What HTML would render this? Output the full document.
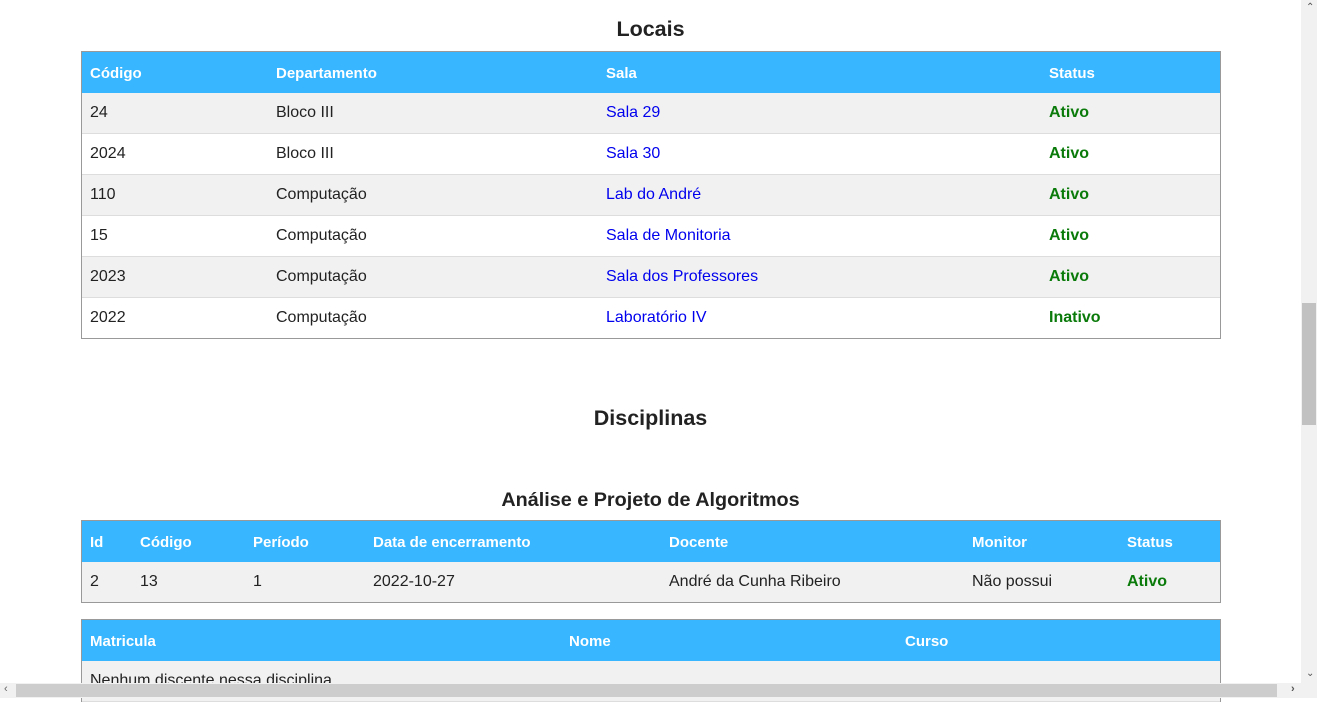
<!DOCTYPE html>
<html><head><meta charset="utf-8"><style>
body{margin:0;width:1317px;height:698px;overflow:hidden;background:#fff;font-family:"Liberation Sans",sans-serif;position:relative;color:#222}
h2{position:absolute;left:0;width:1301px;text-align:center;margin:0;font-size:21.5px;font-weight:bold;color:#222}
h3{position:absolute;left:0;width:1301px;text-align:center;margin:0;font-size:19.8px;font-weight:bold;color:#222}
.t{position:absolute;left:81px;width:1138px;border:1px solid #999;border-top:none;border-bottom:none}
.r{height:40px;position:relative;border-bottom:1px solid #ddd;font-size:16px}
.r span{position:absolute;top:11px}
.h{background:#38b6ff;color:#fff;font-weight:bold;font-size:15px;border-top:1px solid #999;border-bottom:none;height:41px}
.h span{top:13px}
.g{background:#f1f1f1}
.a{color:#0000ee}.s{color:#0a7a0a;font-weight:bold}
</style></head><body>
<h2 style="top:17px">Locais</h2>
<div class="t" style="top:51px;border-bottom:1px solid #999">
<div class="r h"><span style="left:8px">Código</span><span style="left:194px">Departamento</span><span style="left:524px">Sala</span><span style="left:967px">Status</span></div>
<div class="r g"><span style="left:8px">24</span><span style="left:194px">Bloco III</span><span style="left:524px" class="a">Sala 29</span><span style="left:967px" class="s">Ativo</span></div>
<div class="r"><span style="left:8px">2024</span><span style="left:194px">Bloco III</span><span style="left:524px" class="a">Sala 30</span><span style="left:967px" class="s">Ativo</span></div>
<div class="r g"><span style="left:8px">110</span><span style="left:194px">Computação</span><span style="left:524px" class="a">Lab do André</span><span style="left:967px" class="s">Ativo</span></div>
<div class="r"><span style="left:8px">15</span><span style="left:194px">Computação</span><span style="left:524px" class="a">Sala de Monitoria</span><span style="left:967px" class="s">Ativo</span></div>
<div class="r g"><span style="left:8px">2023</span><span style="left:194px">Computação</span><span style="left:524px" class="a">Sala dos Professores</span><span style="left:967px" class="s">Ativo</span></div>
<div class="r" style="border-bottom:none"><span style="left:8px">2022</span><span style="left:194px">Computação</span><span style="left:524px" class="a">Laboratório IV</span><span style="left:967px" class="s">Inativo</span></div>
</div>
<h2 style="top:406px">Disciplinas</h2>
<h3 style="top:489px">Análise e Projeto de Algoritmos</h3>
<div class="t" style="top:520px;border-bottom:1px solid #999">
<div class="r h"><span style="left:8px">Id</span><span style="left:58px">Código</span><span style="left:171px">Período</span><span style="left:291px">Data de encerramento</span><span style="left:587px">Docente</span><span style="left:890px">Monitor</span><span style="left:1045px">Status</span></div>
<div class="r g" style="border-bottom:none"><span style="left:8px">2</span><span style="left:58px">13</span><span style="left:171px">1</span><span style="left:291px">2022-10-27</span><span style="left:587px">André da Cunha Ribeiro</span><span style="left:890px">Não possui</span><span style="left:1045px" class="s">Ativo</span></div>
</div>
<div class="t" style="top:619px">
<div class="r h"><span style="left:8px">Matricula</span><span style="left:487px">Nome</span><span style="left:823px">Curso</span></div>
<div class="r g"><span style="left:8px">Nenhum discente nessa disciplina</span></div>
</div>
<div style="position:absolute;left:1301px;top:0;width:16px;height:683px;background:#f1f1f1"></div>
<div style="position:absolute;left:1302px;top:303px;width:14px;height:122px;background:#c1c1c1"></div>
<div style="position:absolute;left:1306px;top:2px;font-size:10px;color:#555">&#8963;</div>
<div style="position:absolute;left:1306px;top:668px;font-size:10px;color:#555">&#8964;</div>
<div style="position:absolute;left:0;top:683px;width:1317px;height:15px;background:#f1f1f1"></div>
<div style="position:absolute;left:16px;top:684px;width:1261px;height:13px;background:#cdcdcd"></div>
<div style="position:absolute;left:4px;top:683px;font-size:11px;color:#666">&lsaquo;</div>
<div style="position:absolute;left:1291px;top:683px;font-size:11px;color:#555;font-weight:bold">&rsaquo;</div>
</body></html>
